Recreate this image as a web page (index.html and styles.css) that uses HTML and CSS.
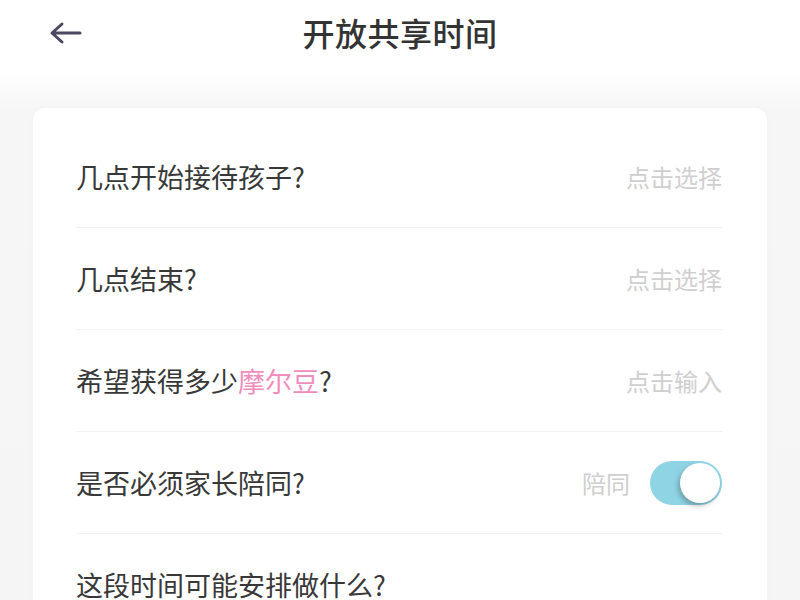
FILE: index.html
```html
<!DOCTYPE html>
<html lang="zh-CN">
<head>
    <meta charset="UTF-8">
    <meta name="viewport" content="width=device-width, initial-scale=1.0">
    <title>开放共享时间</title>
    <link rel="stylesheet" href="styles.css">
</head>
<body>
    <div class="header">
        <a class="back" href="#">
            <svg width="34" height="24" viewBox="0 0 34 24">
                <path d="M32 12H5M14 3L4 12l10 9" fill="none" stroke="#4a4760" stroke-width="3" stroke-linecap="round" stroke-linejoin="round"/>
            </svg>
        </a>
        <h1>开放共享时间</h1>
    </div>

    <div class="card">
        <div class="row">
            <span class="label">几点开始接待孩子?</span>
            <span class="hint">点击选择</span>
        </div>
        <div class="row">
            <span class="label">几点结束?</span>
            <span class="hint">点击选择</span>
        </div>
        <div class="row">
            <span class="label">希望获得多少<em class="pink">摩尔豆</em>?</span>
            <span class="hint">点击输入</span>
        </div>
        <div class="row">
            <span class="label">是否必须家长陪同?</span>
            <div class="side">
                <span class="hint">陪同</span>
                <span class="switch on"><span class="knob"></span></span>
            </div>
        </div>
        <div class="row last">
            <span class="label">这段时间可能安排做什么?</span>
        </div>
    </div>
</body>
</html>
```

FILE: styles.css
```css
body {
    margin: 0;
    height: 600px;
    overflow: hidden;
    font-family: "Noto Sans CJK SC", "Noto Sans", sans-serif;
    background: linear-gradient(#ffffff 0, #ffffff 70px, #f6f6f6 110px, #f5f5f5 100%);
    color: #333;
}
.header {
    position: relative;
    height: 64px;
    display: flex;
    align-items: center;
    justify-content: center;
}
.back {
    position: absolute;
    left: 48px;
    top: 21px;
    display: block;
    height: 24px;
}
.header h1 {
    margin: 0;
    font-size: 32px;
    font-weight: 500;
    color: #333;
    letter-spacing: 0.5px;
}
.card {
    margin: 44px 33px 0;
    background: #fff;
    border-radius: 12px;
    padding: 18px 45px 0 43px;
    box-shadow: 0 0 8px rgba(0,0,0,0.02);
}
.row {
    height: 101px;
    border-bottom: 1px solid #f2f2f2;
    display: flex;
    align-items: center;
    justify-content: space-between;
}
.row.last {
    border-bottom: none;
}
.label {
    font-size: 27px;
    color: #383838;
}
.pink {
    font-style: normal;
    color: #f08dbd;
}
.hint {
    font-size: 24px;
    color: #cfcfcf;
}
.side {
    display: flex;
    align-items: center;
    gap: 20px;
}
.switch {
    position: relative;
    display: block;
    width: 72px;
    height: 44px;
    border-radius: 22px;
    background: #8fd4e4;
}
.switch .knob {
    position: absolute;
    right: 2px;
    top: 2px;
    width: 40px;
    height: 40px;
    border-radius: 50%;
    background: #fff;
    box-shadow: -2px 3px 5px rgba(0,0,0,0.25);
}
```
